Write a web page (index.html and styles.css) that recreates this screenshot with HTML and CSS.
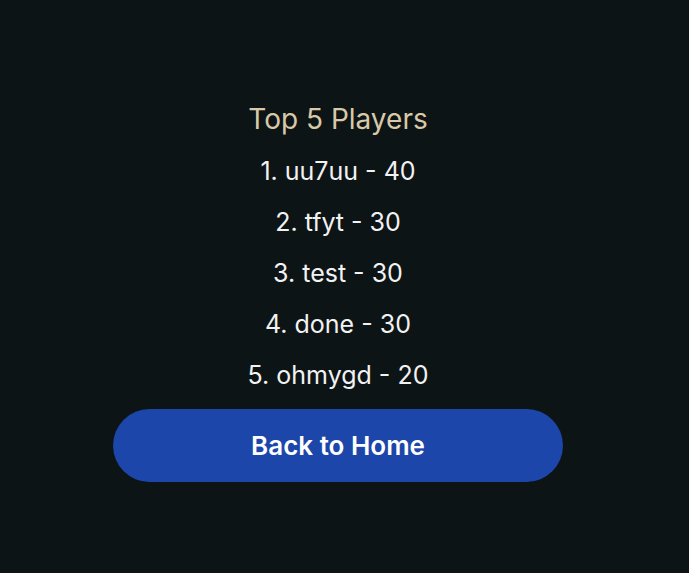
FILE: index.html
```html
<!doctype html>
<html>
	<head>
		<meta charset="utf-8">
		<link rel="stylesheet" href="styles.css">
	</head>
	<body>
		<div id="scores">
			<h2 class="title">Top 5 Players</h2>
			<ol class="players">
				<li>1. uu7uu - 40</li>
				<li>2. tfyt - 30</li>
				<li>3. test - 30</li>
				<li>4. done - 30</li>
				<li>5. ohmygd - 20</li>
			</ol>
			<button class="home-button">Back to Home</button>
		</div>
	</body>
</html>
```

FILE: styles.css
```css
html, body {
	height: 100%;
}

body {
	margin: 0;
	background: #0d1416;
	font-family: Inter, "Noto Sans", sans-serif;
	display: flex;
	flex-direction: column;
	align-items: center;
	justify-content: center;
}

#scores {
	display: flex;
	flex-direction: column;
	align-items: center;
	margin-right: 13px;
}

.title {
	margin: 0;
	font-size: 28px;
	font-weight: 400;
	line-height: 54px;
	color: #d8c9a8;
}

.players {
	list-style: none;
	margin: 0;
	padding: 0;
	text-align: center;
}
	.players li {
		font-size: 25px;
		line-height: 51px;
		color: #f2f2f2;
	}

.home-button {
	margin-top: 8px;
	width: 450px;
	height: 73px;
	border: none;
	border-radius: 37px;
	background: #1c46a9;
	color: #ffffff;
	font-family: inherit;
	font-size: 26px;
	font-weight: 600;
	cursor: pointer;
}
```
